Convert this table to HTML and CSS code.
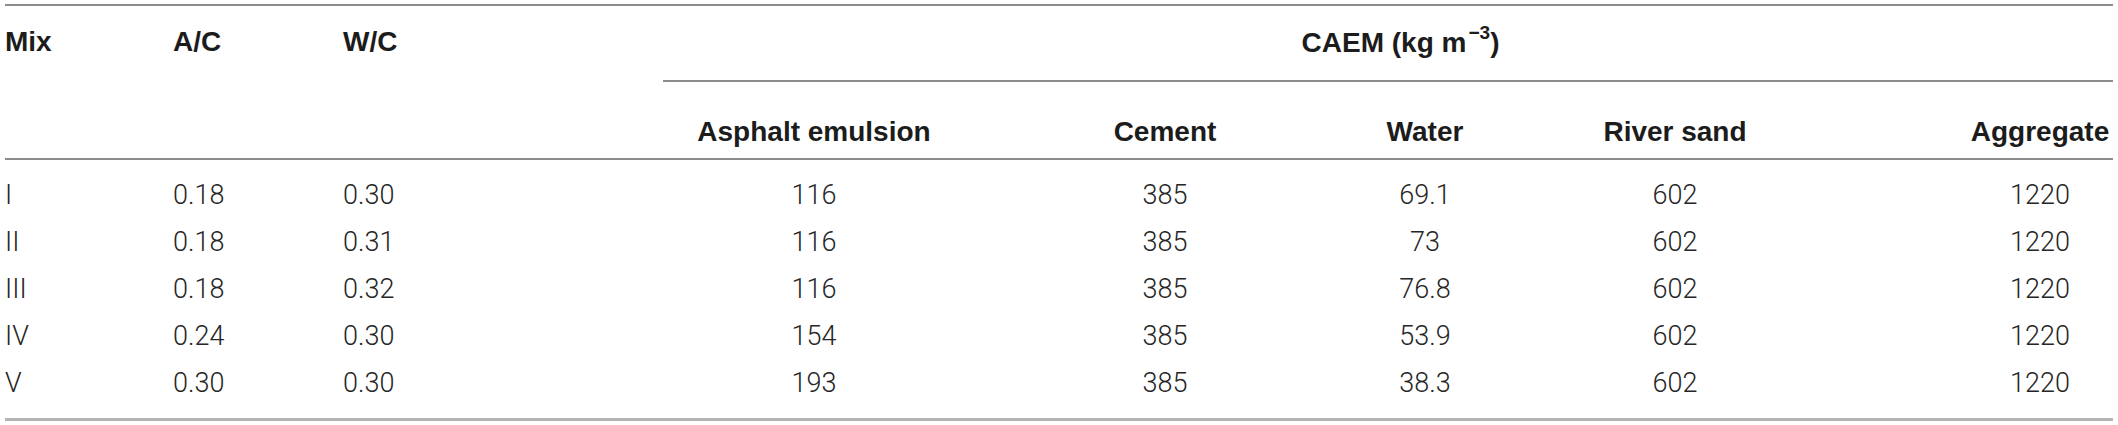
FILE: index.html
```html
<!DOCTYPE html>
<html lang="en">
<head>
<meta charset="utf-8">
<title>CAEM mix proportions</title>
<link rel="stylesheet" href="styles.css">
</head>
<body>
<table class="mix-table">
  <colgroup>
    <col class="c-mix">
    <col class="c-ac">
    <col class="c-wc">
    <col class="c-ae">
    <col class="c-cem">
    <col class="c-wat">
    <col class="c-rs">
    <col class="c-agg">
  </colgroup>
  <thead>
    <tr class="hrow1">
      <th rowspan="2" class="hl first">Mix</th>
      <th rowspan="2" class="hl">A/C</th>
      <th rowspan="2" class="hl">W/C</th>
      <th colspan="5" class="group">CAEM (kg m<sup class="sup">−3</sup>)</th>
    </tr>
    <tr class="hrow2">
      <th class="hc">Asphalt emulsion</th>
      <th class="hc">Cement</th>
      <th class="hc">Water</th>
      <th class="hc">River sand</th>
      <th class="hc last">Aggregate</th>
    </tr>
  </thead>
  <tbody>
    <tr><td class="l first">I</td><td class="l">0.18</td><td class="l">0.30</td><td>116</td><td>385</td><td>69.1</td><td>602</td><td class="last">1220</td></tr>
    <tr><td class="l first">II</td><td class="l">0.18</td><td class="l">0.31</td><td>116</td><td>385</td><td>73</td><td>602</td><td class="last">1220</td></tr>
    <tr><td class="l first">III</td><td class="l">0.18</td><td class="l">0.32</td><td>116</td><td>385</td><td>76.8</td><td>602</td><td class="last">1220</td></tr>
    <tr><td class="l first">IV</td><td class="l">0.24</td><td class="l">0.30</td><td>154</td><td>385</td><td>53.9</td><td>602</td><td class="last">1220</td></tr>
    <tr><td class="l first">V</td><td class="l">0.30</td><td class="l">0.30</td><td>193</td><td>385</td><td>38.3</td><td>602</td><td class="last">1220</td></tr>
  </tbody>
</table>
</body>
</html>
```
FILE: styles.css
```css
html, body {
  margin: 0;
  padding: 0;
  background: #ffffff;
}

.mix-table {
  border-collapse: separate;
  border-spacing: 0;
  table-layout: fixed;
  width: 2108px;
  margin: 4px 0 0 5px;
  color: #222222;
}

.c-mix { width: 163px; }
.c-ac { width: 170px; }
.c-wc { width: 325px; }
.c-ae { width: 302px; }
.c-cem { width: 400px; }
.c-wat { width: 120px; }
.c-rs { width: 380px; }
.c-agg { width: 248px; }

.mix-table th {
  font-family: "Liberation Sans", Arial, sans-serif;
  font-weight: 700;
  font-size: 28px;
  line-height: 34px;
  color: #1c1c1c;
  padding: 0 5px;
  white-space: nowrap;
}

.hrow1 { height: 78px; }
.hrow2 { height: 78px; }

.hrow1 th {
  border-top: 2px solid #8c8c8c;
}

.mix-table th.hl {
  text-align: left;
  vertical-align: top;
  padding-top: 19px;
  border-bottom: 2px solid #8c8c8c;
}

.mix-table th.group {
  text-align: center;
  vertical-align: middle;
  border-bottom: 2px solid #8c8c8c;
  padding-left: 30px;
}

.sup {
  font-size: 19px;
  line-height: 0;
  vertical-align: 13px;
  margin-left: 2px;
}

.mix-table th.hc {
  text-align: center;
  vertical-align: middle;
  padding-top: 24px;
  border-bottom: 2px solid #8c8c8c;
}

.mix-table .first { padding-left: 0; }
.mix-table .last { padding-left: 102px; padding-right: 0; }

.mix-table td {
  font-family: Roboto, "Liberation Sans", sans-serif;
  font-weight: 300;
  font-size: 27px;
  line-height: 1.2;
  color: #262626;
  text-align: center;
  vertical-align: middle;
  height: 47px;
  padding: 0 5px;
  white-space: nowrap;
}

.mix-table td.l { text-align: left; }
.mix-table td.first { padding-left: 0; }
.mix-table td.last { padding-left: 102px; padding-right: 0; }

.mix-table tbody tr:first-child td { padding-top: 12px; }
.mix-table tbody tr:last-child td {
  padding-bottom: 11px;
  border-bottom: 3px solid #b4b4b4;
}
```
